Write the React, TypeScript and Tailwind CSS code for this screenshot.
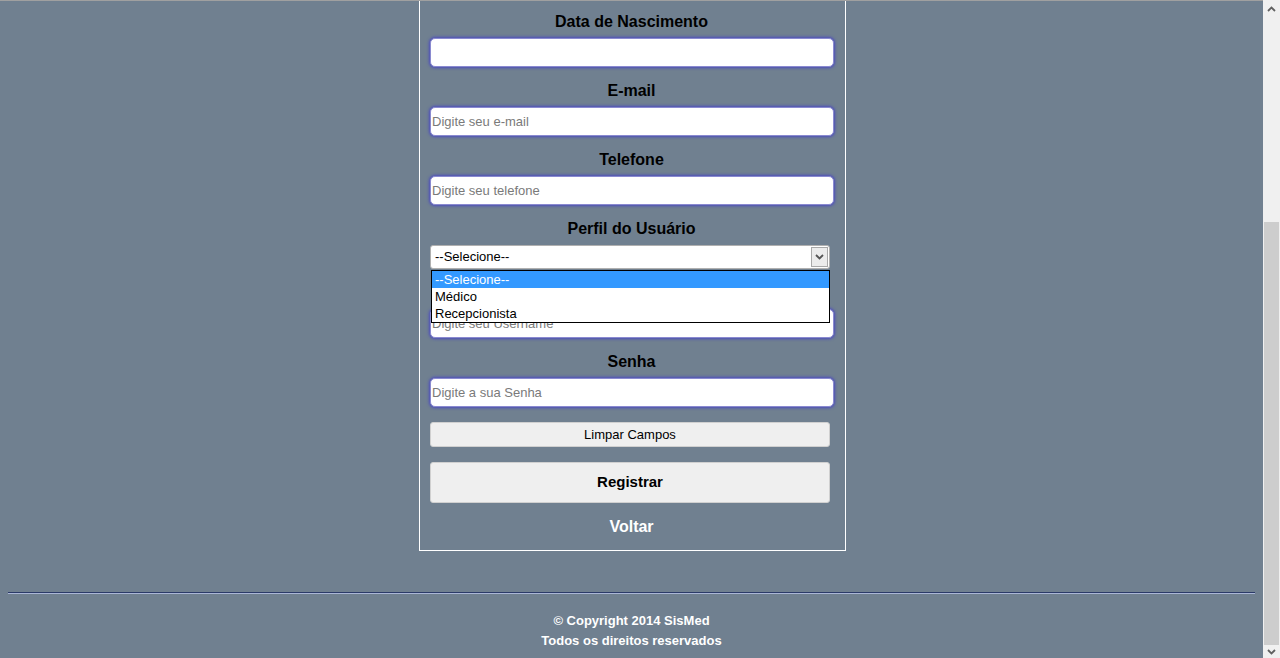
const font = { fontFamily: '"Liberation Sans", Arial, sans-serif' }

const inputClass =
  'block w-[404px] h-[29px] rounded-[5px] border border-[#8a8ad0] bg-white px-[1px] text-[13px] text-black placeholder:text-[#7a7a7a] shadow-[0_0_3px_1px_#4b4bbf] outline-none'

function Field({ label, placeholder }: { label: string; placeholder?: string }) {
  return (
    <div className="mb-[15px]">
      <div className="h-[18px] text-center text-[16px] font-bold leading-[18px] text-black">{label}</div>
      <input className={`mt-[7px] ${inputClass}`} placeholder={placeholder} />
    </div>
  )
}

function ProfileSelect() {
  return (
    <div className="relative mb-[15px]">
      <div className="h-[18px] text-center text-[16px] font-bold leading-[18px] text-black">Perfil do Usuário</div>
      <div className="mt-[7px] flex h-[24px] w-[400px] items-center justify-between rounded-[3px] border border-[#b0b0b0] bg-white pl-[4px] pr-[1px] text-[13px] text-black">
        <span>--Selecione--</span>
        <span className="flex h-[20px] w-[17px] items-center justify-center border border-[#a9a9a9] bg-[#ececec]">
          <svg width="9" height="6" viewBox="0 0 9 6">
            <path d="M1 1 L4.5 4.5 L8 1" fill="none" stroke="#555" strokeWidth="1.8" />
          </svg>
        </span>
      </div>
      {/* lista aberta do select */}
      <div className="absolute left-[1px] top-[50px] z-10 w-[399px] border border-black bg-white text-[13px] leading-[17px] text-black">
        <div className="h-[17px] bg-[#3399ff] pl-[3px] text-white">--Selecione--</div>
        <div className="h-[17px] pl-[3px]">Médico</div>
        <div className="h-[17px] pl-[3px]">Recepcionista</div>
      </div>
    </div>
  )
}

export default function App() {
  return (
    <div className="flex h-[658px] w-[1280px] overflow-hidden bg-[#708090]" style={font}>
      <div className="flex w-[1263px] flex-col border-t border-[#a0a0a0]">
        <div className="ml-[419px] w-[427px] border-x border-b border-white pl-[10px] pr-[12px] pt-[12px] pb-[14px]">
          <Field label="Data de Nascimento" />
          <Field label="E-mail" placeholder="Digite seu e-mail" />
          <Field label="Telefone" placeholder="Digite seu telefone" />
          <ProfileSelect />
          <Field label="Username" placeholder="Digite seu Username" />
          <Field label="Senha" placeholder="Digite a sua Senha" />
          <button
            type="button"
            className="block h-[25px] w-[400px] rounded-[3px] border border-[#d0d0d0] bg-[#efefef] text-[13px] text-black"
          >
            Limpar Campos
          </button>
          <button
            type="button"
            className="mt-[15px] block h-[41px] w-[400px] rounded-[3px] border border-[#d0d0d0] bg-[#efefef] text-[15px] font-bold text-black"
          >
            Registrar
          </button>
          <div className="mt-[15px] h-[18px] text-center text-[16px] font-bold leading-[18px] text-white">Voltar</div>
        </div>
        <div className="mx-[8px] mt-[41px] border-t border-b border-t-[#2b3a68] border-b-[#aab6d6]" />
        <div className="mt-[17px] text-center text-[13px] font-bold leading-[20px] text-white">
          <div>© Copyright 2014 SisMed</div>
          <div>Todos os direitos reservados</div>
        </div>
      </div>
      <div className="flex w-[17px] flex-col bg-[#f0f0f0]">
        <div className="flex h-[17px] items-center justify-center">
          <svg width="9" height="6" viewBox="0 0 9 6">
            <path d="M1 5 L4.5 1.5 L8 5" fill="none" stroke="#606060" strokeWidth="1.8" />
          </svg>
        </div>
        <div className="flex-1 pt-[205px]">
          <div className="mx-[1px] h-[423px] bg-[#cdcdcd]" />
        </div>
        <div className="flex h-[13px] items-center justify-center">
          <svg width="9" height="6" viewBox="0 0 9 6">
            <path d="M1 1 L4.5 4.5 L8 1" fill="none" stroke="#606060" strokeWidth="1.8" />
          </svg>
        </div>
      </div>
    </div>
  )
}
